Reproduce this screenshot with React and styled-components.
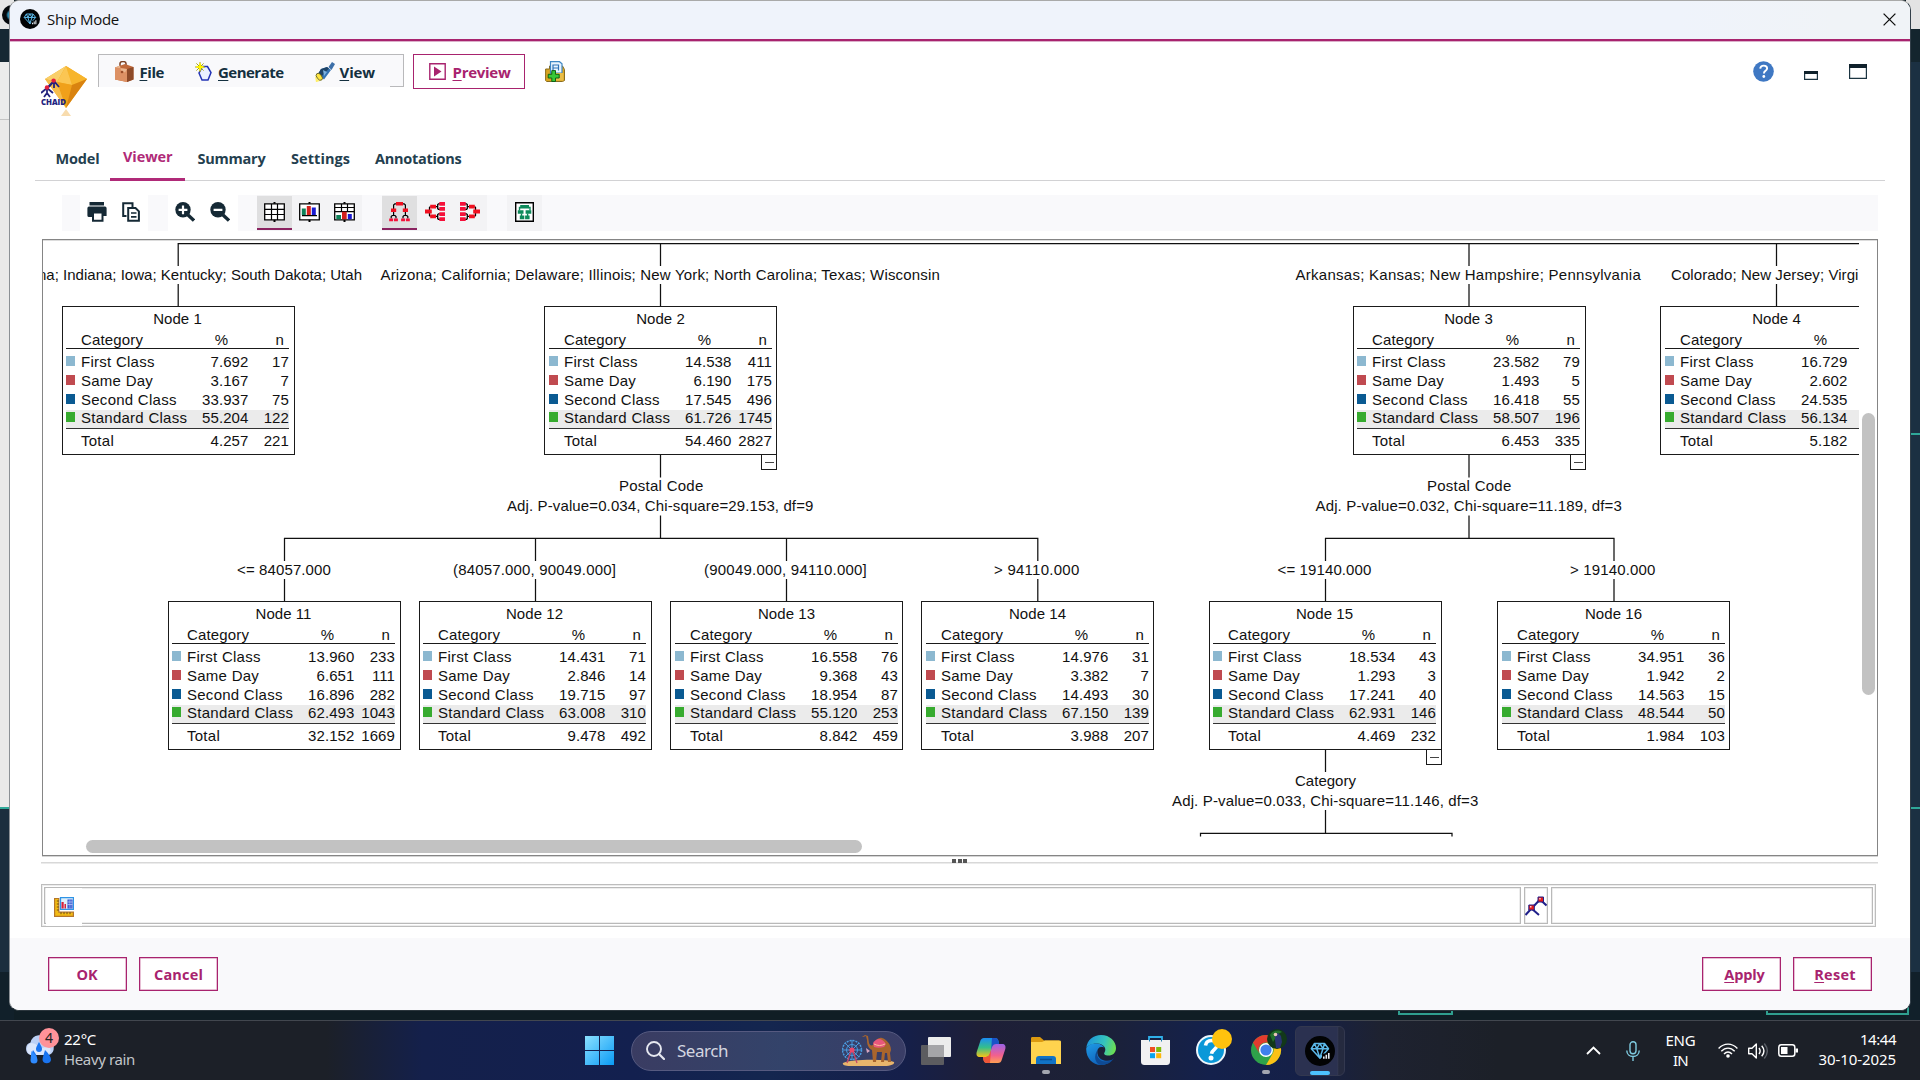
import React, { useLayoutEffect, useRef, useState } from "react";
import styled, { createGlobalStyle, css } from "styled-components";

const MAGENTA = "#a8236e";
const INK = "#14303f";
const UI = `"Open Sans", "Noto Sans", sans-serif`;
const SANS = `"Liberation Sans", Arial, sans-serif`;

const Global = createGlobalStyle`
  * { box-sizing: border-box; }
  html, body { margin: 0; padding: 0; overflow: hidden; }
  svg { display: block; flex: none; }
`;

/* ---------- text that is tracked to a fixed run width ---------- */
const Run = styled.span`
  display: inline-block;
  white-space: pre;
  width: ${(p) => p.$w}px;
`;

function Fit({ w, children }) {
  const ref = useRef(null);
  const [track, setTrack] = useState(0);
  useLayoutEffect(() => {
    const range = document.createRange();
    range.selectNodeContents(ref.current);
    const natural = range.getBoundingClientRect().width;
    setTrack((w - natural) / ref.current.textContent.length);
  }, [w]);
  return (
    <Run ref={ref} $w={w} style={{ letterSpacing: `${track}px` }}>
      {children}
    </Run>
  );
}

/* ---------- desktop and the window behind ---------- */
const Desktop = styled.div`
  position: relative;
  width: 1920px;
  height: 1080px;
  overflow: hidden;
  display: flex;
  flex-direction: column;
  background: #101e25;
  font-family: ${UI};
`;
const Behind = styled.div`
  height: 1020px;
  flex: none;
  display: flex;
  justify-content: space-between;
  background: #101e25;
`;
const EdgeStrip = styled.div`
  width: 14px;
  display: flex;
  flex-direction: column;
`;
const Band = styled.div`
  height: ${(p) => p.$h}px;
  background: ${(p) => p.$c};
  overflow: hidden;
`;
const BackDot = styled.div`
  width: 20px;
  height: 20px;
  margin: 5px 0 0 2px;
  border-radius: 50%;
  background: radial-gradient(circle, #2d8fb5 0 4px, #05090c 6px);
`;
const BackButton = styled.div`
  position: absolute;
  left: ${(p) => p.$x}px;
  top: 1000px;
  width: ${(p) => p.$w}px;
  height: 14.5px;
  border: 2px solid #2f9f8f;
`;

/* ---------- dialog ---------- */
const Dialog = styled.div`
  position: absolute;
  left: 9px;
  top: 0;
  width: 1902px;
  height: 1011px;
  border: 1px solid #9c9c9c;
  border-color: #a9a9a9 #333f49 #2b363d #8b9095;
  border-radius: 10px;
  overflow: hidden;
  background: #fff;
  display: flex;
  flex-direction: column;
`;
const TitleBar = styled.div`
  height: 40px;
  flex: none;
  display: flex;
  align-items: center;
  padding: 0 14.5px 2px 9.5px;
  background: linear-gradient(90deg, #eff3fb 0 88%, #f0f3f7 96%);
  border-bottom: 2px solid ${MAGENTA};
  box-shadow: 0 1px 0 #dcb0cb;
  font-size: 15px;
  color: #111;
`;
const TitleText = styled.div`
  flex: 1;
  margin-left: 7.5px;
`;
const Header = styled.div`
  height: 104px;
  flex: none;
  display: flex;
  align-items: flex-start;
  padding: 13px 43px 0 31px;
`;
const LogoBox = styled.div`
  margin: 12px 10px 0 0;
`;
const MenuBar = styled.div`
  width: 306px;
  height: 33px;
  display: flex;
  align-items: center;
  padding: 1px 0 0 16px;
  background: linear-gradient(#b9b9bb, #b9b9bb) 100% 100% / 13px 1.5px no-repeat, #f9f9fb;
  border: 1.5px solid #b9b9bb;
  border-bottom: 0;
  color: ${INK};
  font-size: 15px;
  font-weight: 700;
  u { text-underline-offset: 2px; text-decoration-thickness: 1px; }
`;
const MenuItem = styled.div`
  display: flex;
  align-items: center;
  gap: ${(p) => p.$gap}px;
  margin-right: ${(p) => p.$mr || 0}px;
`;
const PreviewButton = styled.div`
  width: 112px;
  height: 35px;
  margin: 0 20px 0 9px;
  display: flex;
  align-items: center;
  gap: 7px;
  padding-left: 14.5px;
  border: 1.5px solid ${MAGENTA};
  background: #fff;
  color: ${MAGENTA};
  font-size: 15px;
  font-weight: 700;
  u { text-underline-offset: 2px; text-decoration-thickness: 1px; }
`;
const FolderBox = styled.div`
  margin-top: 7px;
  flex: 1;
`;
const WindowTools = styled.div`
  display: flex;
  align-items: flex-end;
  margin-top: 7px;
`;
const ToolSpace = styled.div`
  margin: 0 0 ${(p) => p.$mb}px ${(p) => p.$ml}px;
`;

const Tabs = styled.div`
  height: 37px;
  flex: none;
  display: flex;
  align-items: stretch;
  margin: -1px 25px 0 25px;
  padding-left: 20.5px;
  border-bottom: 1.5px solid #d2d2d4;
  font-size: 14.5px;
  font-weight: 700;
  color: #24404f;
`;
const Tab = styled.div`
  height: 37px;
  line-height: 20px;
  padding-top: ${(p) => (p.$on ? 3 : 5)}px;
  margin-right: ${(p) => p.$mr}px;
  ${(p) =>
    p.$on &&
    css`
      padding-left: 13px;
      width: 75px;
      color: #b02a78;
      border-bottom: 3px solid #b02a78;
    `}
`;

const ToolBar = styled.div`
  width: 1816px;
  height: 36px;
  flex: none;
  margin: 14px 0 8px 52px;
  padding-left: 18px;
  display: flex;
  background: #f9f9fb;
`;
const ToolGroup = styled.div`
  display: flex;
  background: ${(p) => p.$bg};
  margin-right: ${(p) => p.$mr || 0}px;
`;
const ToolCell = styled.div`
  width: ${(p) => p.$w || 35}px;
  height: 33.5px;
  margin-top: 1px;
  display: flex;
  align-items: center;
  justify-content: center;
  border-bottom: 2px solid ${(p) => (p.$on ? "#8a2360" : "transparent")};
  background: ${(p) => (p.$on ? "#dfdfe0" : "transparent")};
`;

/* ---------- tree canvas ---------- */
const Frame = styled.div`
  width: 1836px;
  height: 617px;
  flex: none;
  margin-left: 32px;
  display: grid;
  grid-template-columns: 1815.5px 1fr;
  grid-template-rows: 597px 1fr;
  border: 1px solid #858585;
  box-shadow: 0 1px 0 #d5d5d5, inset 0 1px 0 #dcdcdc;
`;
const Stage = styled.div`
  position: relative;
  overflow: hidden;
  font-family: ${SANS};
  font-size: 15px;
  color: #111;
`;
const VThumb = styled.div`
  width: 13px;
  height: 282px;
  margin: 173px 0 0 3px;
  border-radius: 6.5px;
  background: #c2c2c2;
`;
const HThumb = styled.div`
  width: 776px;
  height: 13px;
  margin: 3px 0 0 43px;
  border-radius: 6.5px;
  background: #c2c2c2;
`;
const Caption = styled.div`
  position: absolute;
  left: ${(p) => p.$x}px;
  top: ${(p) => p.$y}px;
  line-height: 19px;
  white-space: nowrap;
`;
const NodeBox = styled.div`
  position: absolute;
  left: ${(p) => p.$x}px;
  top: ${(p) => p.$y}px;
  width: 233px;
  height: 149px;
  padding: ${(p) => (p.$nudge ? "2px 5px 0 3px" : "2px 4px 0")};
  border: 1px solid #1a1a1a;
  background: #fff;
  line-height: 19px;
`;
const NodeTitle = styled.div`
  height: 20px;
  text-align: center;
  letter-spacing: 0.05px;
`;
const NodeHead = styled.div`
  height: 20px;
  display: grid;
  grid-template-columns: 15px 108px 65px 1fr;
  padding-top: 1px;
  border-bottom: 1px solid #1a1a1a;
`;
const HeadCell = styled.div`
  text-align: ${(p) => p.$a || "left"};
  padding-right: ${(p) => p.$pr || 0}px;
  letter-spacing: 0.15px;
`;
const NodeRows = styled.div`
  margin-top: 4px;
  border-bottom: 1.5px solid #333;
`;
const NodeRow = styled.div`
  height: 18.75px;
  display: grid;
  grid-template-columns: 15px minmax(0, 1fr) 60px 40.5px;
  line-height: 17px;
  background: ${(p) => (p.$hot ? "linear-gradient(#ebebeb, #ebebeb) 0 1px no-repeat" : "none")};
  margin-top: ${(p) => p.$mt || 0}px;
`;
const Swatch = styled.div`
  width: 8.5px;
  height: 10px;
  margin-top: 3px;
  background: ${(p) => p.$c};
`;
const Name = styled.div`
  letter-spacing: 0.26px;
  white-space: nowrap;
`;
const Num = styled.div`
  text-align: right;
  letter-spacing: 0.1px;
  white-space: nowrap;
`;
const Collapse = styled.div`
  position: absolute;
  right: -1px;
  top: 147px;
  width: 16px;
  height: 16px;
  border: 1px solid #1a1a1a;
  background: #fff;
  display: flex;
  align-items: center;
  justify-content: center;
  &::after { content: ""; width: 9px; height: 1px; background: #444; }
`;

const CLASSES = [
  ["First Class", "#8cb8d0"],
  ["Same Day", "#c04a50"],
  ["Second Class", "#0a5a92"],
  ["Standard Class", "#37ab2f"],
];
const NODES = [
  { id: 1, x: 62, y: 306, nudge: true, pct: ["7.692", "3.167", "33.937", "55.204", "4.257"], n: [17, 7, 75, 122, 221] },
  { id: 2, x: 544, y: 306, open: true, pct: ["14.538", "6.190", "17.545", "61.726", "54.460"], n: [411, 175, 496, 1745, 2827] },
  { id: 3, x: 1353, y: 306, nudge: true, open: true, pct: ["23.582", "1.493", "16.418", "58.507", "6.453"], n: [79, 5, 55, 196, 335] },
  { id: 4, x: 1660, y: 306, pct: ["16.729", "2.602", "24.535", "56.134", "5.182"] },
  { id: 11, x: 168, y: 601, nudge: true, pct: ["13.960", "6.651", "16.896", "62.493", "32.152"], n: [233, 111, 282, 1043, 1669] },
  { id: 12, x: 419, y: 601, nudge: true, pct: ["14.431", "2.846", "19.715", "63.008", "9.478"], n: [71, 14, 97, 310, 492] },
  { id: 13, x: 670, y: 601, pct: ["16.558", "9.368", "18.954", "55.120", "8.842"], n: [76, 43, 87, 253, 459] },
  { id: 14, x: 921, y: 601, pct: ["14.976", "3.382", "14.493", "67.150", "3.988"], n: [31, 7, 30, 139, 207] },
  { id: 15, x: 1209, y: 601, nudge: true, open: true, pct: ["18.534", "1.293", "17.241", "62.931", "4.469"], n: [43, 3, 40, 146, 232] },
  { id: 16, x: 1497, y: 601, pct: ["34.951", "1.942", "14.563", "48.544", "1.984"], n: [36, 2, 15, 50, 103] },
];
/* text, left edge, baseline, run width */
const CAPTIONS = [
  ["na; Indiana; Iowa; Kentucky; South Dakota; Utah", 38, 280, 324],
  ["Arizona; California; Delaware; Illinois; New York; North Carolina; Texas; Wisconsin", 380.5, 280, 559.5],
  ["Arkansas; Kansas; New Hampshire; Pennsylvania", 1295.5, 280, 345.5],
  ["Colorado; New Jersey; Virgi", 1671, 280, 187.5],
  ["Postal Code", 619, 491, 84.5],
  ["Adj. P-value=0.034, Chi-square=29.153, df=9", 507, 511, 306.5],
  ["Postal Code", 1427, 491, 84.5],
  ["Adj. P-value=0.032, Chi-square=11.189, df=3", 1315.5, 511, 306.5],
  ["<= 84057.000", 237, 575, 94],
  ["(84057.000, 90049.000]", 453, 575, 163],
  ["(90049.000, 94110.000]", 704, 575, 163],
  ["> 94110.000", 994, 575, 85.5],
  ["<= 19140.000", 1277.5, 575, 94],
  ["> 19140.000", 1570, 575, 85.5],
  ["Category", 1295, 786, 61],
  ["Adj. P-value=0.033, Chi-square=11.146, df=3", 1172, 806, 306.5],
];
const LINKS = [
  "M178 243.5H1860",
  "M178.2 243V266M178.2 284V307",
  "M660.5 243V266M660.5 284V307",
  "M1469 243V266M1469 284V307",
  "M1776.5 243V266M1776.5 284V307",
  "M660.5 455V477.5M660.5 515.5V538",
  "M1469 455V477.5M1469 515.5V538",
  "M284 538.3H1038.4",
  "M284.5 538V561M284.5 579V602",
  "M535.5 538V561M535.5 579V602",
  "M786.5 538V561M786.5 579V602",
  "M1037.8 538V561M1037.8 579V602",
  "M1325 538.3H1614.5",
  "M1325.5 538V561M1325.5 579V602",
  "M1614 538V561M1614 579V602",
  "M1325.5 750V772M1325.5 810V833",
  "M1200.5 836.5V833.3H1452V836.5",
];

function TreeNode({ node }) {
  return (
    <NodeBox $x={node.x - 43} $y={node.y - 240} $nudge={node.nudge}>
      <NodeTitle>{`Node ${node.id}`}</NodeTitle>
      <NodeHead>
        <div />
        <HeadCell>Category</HeadCell>
        <HeadCell $a="center">%</HeadCell>
        {node.n && <HeadCell $a="right" $pr={5}>n</HeadCell>}
      </NodeHead>
      <NodeRows>
        {CLASSES.map(([name, color], i) => (
          <NodeRow key={name} $hot={i === 3}>
            <Swatch $c={color} />
            <Name>{name}</Name>
            <Num>{node.pct[i]}</Num>
            {node.n && <Num>{node.n[i]}</Num>}
          </NodeRow>
        ))}
      </NodeRows>
      <NodeRow $mt={3}>
        <div />
        <Name>Total</Name>
        <Num>{node.pct[4]}</Num>
        {node.n && <Num>{node.n[4]}</Num>}
      </NodeRow>
      {node.open && <Collapse />}
    </NodeBox>
  );
}

/* ---------- lower dialog ---------- */
const Splitter = styled.div`
  height: 28px;
  width: 1837px;
  flex: none;
  margin-left: 31px;
  padding-top: 2.5px;
  display: flex;
  justify-content: center;
  gap: 1.5px;
  background: linear-gradient(#d8d8d8, #d8d8d8) 0 6px / 100% 1.5px no-repeat;
`;
const Grip = styled.div`
  width: 4px;
  height: 4px;
  background: #555;
`;
const FieldRow = styled.div`
  width: 1835px;
  height: 43px;
  flex: none;
  margin: 0 0 11px 31px;
  padding: 2px 2px 3px 2px;
  display: flex;
  gap: 3px;
  border: 1px solid #bdbdbd;
  box-shadow: inset 0 0 0 1px #ececec;
`;
const Field = styled.div`
  width: ${(p) => p.$w}px;
  height: 37px;
  display: flex;
  align-items: center;
  border: 1px solid #b9b9b9;
  box-shadow: inset 0 0 0 0.5px #dcdcdc;
`;
const MetricCell = styled.div`
  width: 36px;
  height: 38px;
  margin: 0 0 -2px 1px;
  padding: 9px 0 0 7.5px;
  background: #fff;
`;
const Footer = styled.div`
  flex: 1;
  display: flex;
  align-items: flex-start;
  gap: 12.5px;
  padding: 19px 38px 0 37.5px;
  background: #f9f9fb;
  color: ${MAGENTA};
  font-size: 14.5px;
  font-weight: 700;
`;
const PushButton = styled.div`
  width: 79px;
  height: 34px;
  display: flex;
  align-items: center;
  justify-content: center;
  padding: 0 0 0 ${(p) => p.$shift || 0}px;
  border: 1px solid ${MAGENTA};
  box-shadow: inset 0 0 0 0.5px #cf7eaa;
  background: #fff;
  u { text-underline-offset: 2px; text-decoration-thickness: 1px; }
`;
const Spring = styled.div`
  flex: 1;
`;

/* ---------- taskbar ---------- */
const Taskbar = styled.div`
  height: 60px;
  flex: none;
  display: flex;
  align-items: center;
  border-top: 1px solid #42474f;
  background: linear-gradient(90deg, #1c2028 0 17%, #14204b 22%, #13204f 33%, #14264f 40%, #151f4a 47%, #1e1f38 51%, #1c2136 57%, #14214c 63%, #152047 68%, #1e2230 72%, #1c2028 78%);
  color: #fff;
  font-family: "Noto Sans", "Open Sans", sans-serif;
  font-size: 15px;
`;
const Weather = styled.div`
  display: flex;
  gap: 6px;
  padding-left: 24px;
  width: 585px;
`;
const TwoLines = styled.div`
  line-height: 20px;
  text-align: ${(p) => p.$a || "left"};
  padding-bottom: ${(p) => p.$lift}px;
  margin-top: ${(p) => p.$pull || 0}px;
`;
const Dim = styled.div`
  color: #c3c6ca;
`;
const WeatherPic = styled.div`
  position: relative;
  width: 34px;
  height: 40px;
`;
const Badge = styled.div`
  position: absolute;
  left: 15px;
  top: -3px;
  width: 20px;
  height: 20px;
  border-radius: 50%;
  background: #ff9299;
  color: #222;
  font-size: 14px;
  line-height: 20px;
  text-align: center;
`;
const SearchBox = styled.div`
  width: 275px;
  height: 40px;
  margin: 0 15px 0 17px;
  display: flex;
  align-items: center;
  padding: 0 10px 0 14px;
  border-radius: 20px;
  border: 1px solid #565a80;
  background: linear-gradient(90deg, #3a3c62, #33436a 55%, #3a3d66);
  color: #d4d6e0;
  font-size: 17px;
`;
const SearchText = styled.div`
  flex: 1;
  padding-left: 12px;
`;
const AppSlot = styled.div`
  width: ${(p) => p.$w || 55}px;
  height: 59px;
  display: flex;
  flex-direction: column;
  align-items: center;
  padding-top: ${(p) => p.$pt || 0}px;
`;
const Running = styled.div`
  width: ${(p) => p.$w}px;
  height: 4px;
  margin-top: ${(p) => p.$mt}px;
  margin-right: ${(p) => p.$mr || 0}px;
  border-radius: 2px;
  background: ${(p) => p.$c};
`;
const ActiveApp = styled.div`
  width: 50px;
  height: 50px;
  margin-left: 14px;
  display: flex;
  flex-direction: column;
  align-items: center;
  padding: 9px 0 0 0;
  border-radius: 6px;
  border: 1px solid #33384f;
  background: linear-gradient(90deg, #2b3150 0 86%, #353a52 87%, #252a3f 89%);
`;
const Tray = styled.div`
  flex: 1;
  display: flex;
  align-items: center;
  justify-content: flex-end;
  padding-right: 24px;
`;
const TraySpace = styled.div`
  margin-right: ${(p) => p.$mr}px;
`;

/* ---------- icons ---------- */
const DiamondIcon = ({ s }) => (
  <svg width={s} height={s} viewBox="0 0 30 30">
    <circle cx="15" cy="15" r="15" fill="#020304" />
    <g fill="none" stroke="#5bb8e8" strokeWidth="1.5" strokeLinejoin="round">
      <path d="M9.5 7.5h10l4 5.2-8.5 9.5-8.7-9.5zM6.3 12.7h17.2M9.5 7.5l2.3 5.2 3 9.3 3.2-9.3 1.5-5.2M11.8 12.7l3-5.2 3.2 5.2" />
    </g>
    <path d="M17 17.5h8v5.5h-8z" fill="#020304" />
    <path d="M18 20.5h1.6v2.3H18zM20.5 18.7h1.6v4.1h-1.6zM23 17h1.6v5.8H23z" fill="#e6edf2" />
  </svg>
);
const CloseIcon = () => (
  <svg width="13" height="13" viewBox="0 0 13 13">
    <path d="M.6.6l11.8 11.8M12.4.6L.6 12.4" stroke="#111" strokeWidth="1.3" />
  </svg>
);
const ChaidLogo = () => (
  <svg width="47" height="50" viewBox="0 0 47 50">
    <path d="M25 0L46 13 25 42 4 13z" fill="#f2aa1c" />
    <path d="M25 0L46 13 31 19z" fill="#f7b52c" />
    <path d="M25 0L4 13l12 3z" fill="#f9cf6a" />
    <path d="M25 0l6 19-15-3z" fill="#fbc653" />
    <path d="M16 16l15 3-6 23z" fill="#f0a01a" />
    <path d="M31 19l15-6-21 29z" fill="#d98310" />
    <path d="M4 13l12 3 9 26z" fill="#f6bd4c" />
    <path d="M25 43l5 7H20z" fill="#f8dcae" />
    <g stroke="#23237e" strokeWidth="1.8" fill="none">
      <path d="M0 27l6-5 6 5M6 22v6M3 31l3-4 3 4M6 22l7-7M8 21l5-6 5 6M13 15v7" />
    </g>
    <circle cx="6" cy="21.5" r="2.2" fill="#e21f3c" />
    <circle cx="12.6" cy="14.6" r="2.2" fill="#e21f3c" />
    <text x="0" y="38.5" fontFamily="Open Sans, sans-serif" fontWeight="800" fontSize="8.6" textLength="25" lengthAdjust="spacingAndGlyphs" fill="#23237e">CHAID</text>
  </svg>
);
const BagIcon = () => (
  <svg width="19" height="21" viewBox="0 0 19 21">
    <path d="M5 5V2.5C5 1 6.3.6 8 .6s3 .4 3 1.900V5" fill="none" stroke="#7a3f22" strokeWidth="1.5" />
    <path d="M0 6.500l10-3.500 8.500 3v12.500l-6.500 2.500L0 18.500z" fill="#c0683a" />
    <path d="M0 6.500l12 1.500V21L0 18.500z" fill="#dd9164" />
    <path d="M0 6.500l5-2 1 5 4 2 2-3.500z" fill="#eab58e" />
    <path d="M12 8l6.500-2v12.500L12 21z" fill="#8d4a28" />
    <circle cx="7" cy="11" r="1.3" fill="#9c4d28" />
  </svg>
);
const GenerateIcon = () => (
  <svg width="17" height="19" viewBox="0 0 17 19">
    <path d="M7.5 4.5h5l3.500 6-3 7.500H7L4 11z" fill="#eaf1ff" stroke="#2434b5" strokeWidth="1.5" />
    <path d="M5 0v10M0 5h10M1.4 1.4l7.2 7.2M8.600 1.400L1.400 8.600" stroke="#a8a41a" strokeWidth="1" />
    <path d="M5 1.5v7M1.5 5h7" stroke="#fff200" strokeWidth="2" />
  </svg>
);
const TorchIcon = () => (
  <svg width="20" height="20" viewBox="0 0 20 20">
    <path d="M0 14l5 5-4 1.200z" fill="#ffef6a" />
    <path d="M17 0l3 2-3.500 6-3-3z" fill="#3c6fa8" />
    <path d="M12 5l4 3-7 9.500L3 12l3-5z" fill="#3474b4" />
    <path d="M12 5l2 1.400-8 8.600-3-3 3-5z" fill="#1f4468" />
    <path d="M8 8l4 2-3 4z" fill="#7db2e0" />
    <ellipse cx="4.300" cy="14.800" rx="2.400" ry="4" transform="rotate(-38 4.3 14.8)" fill="#ffe640" stroke="#5c5a20" strokeWidth=".8" />
  </svg>
);
const PreviewIcon = () => (
  <svg width="17" height="17" viewBox="0 0 17 17">
    <path d="M.8.8h15.4v15.4H.8z" fill="#fff" stroke={MAGENTA} strokeWidth="1.4" />
    <path d="M5 3.600l7.500 4.900L5 13.400z" fill={MAGENTA} />
  </svg>
);
const FolderPlusIcon = () => (
  <svg width="20" height="21" viewBox="0 0 20 21">
    <path d="M.6 8h3.900V5h13l2 3.500v11L17.500 20.500H1.600l-1-1z" fill="#d9a520" stroke="#8a6d1e" />
    <path d="M5.500.7h9l2.500 2v9.500H5.500z" fill="#eaf5ff" stroke="#3f87c4" strokeWidth="1.200" />
    <path d="M8 9.500V4h5.500v5.500M8 7h5.500" fill="none" stroke="#2f74b8" strokeWidth="1.200" />
    <path d="M11 12h7.500v7.500H11z" fill="#e9bd48" />
    <path d="M6.800 9.600h3.700v3.700h3.700V17h-3.700v3.500H6.800V17H3.200v-3.700h3.600z" fill="#37c837" stroke="#0e6316" strokeWidth="1" />
  </svg>
);
const HelpIcon = () => (
  <svg width="21" height="21" viewBox="0 0 21 21">
    <circle cx="10.5" cy="10.5" r="10.3" fill="#3f78c3" />
    <path d="M7.2 7.6c.2-2 1.500-3 3.500-3s3.400 1.100 3.400 2.800c0 2.400-3.200 2.500-3.200 5" fill="none" stroke="#fff" strokeWidth="1.900" />
    <circle cx="10.800" cy="15.500" r="1.400" fill="#fff" />
  </svg>
);
const PaneIcon = ({ w, h, t }) => (
  <svg width={w} height={h} viewBox={`0 0 ${w} ${h}`}>
    <path d={`M.6.6h${w - 1.2}v${h - 1.2}H.6z`} fill="#fff" stroke="#1c3542" strokeWidth="1.2" />
    <path d={`M0 0h${w}v${t}H0z`} fill="#10222c" />
  </svg>
);
const DARK = "#152935";
const PrintIcon = () => (
  <svg width="20" height="20" viewBox="0 0 20 20">
    <path d="M2.500 0h14.500v3.500H2.500z" fill={DARK} />
    <path d="M2 4.600h16a1.600 1.600 0 0 1 1.600 1.600V14h-4v-3H5v4H2a1.600 1.600 0 0 1-1.600-1.600V6.200A1.600 1.600 0 0 1 2 4.600z" fill={DARK} />
    <path d="M6 10.500h9.500v8.300H6z" fill="#fff" stroke={DARK} strokeWidth="2" />
  </svg>
);
const CopyIcon = () => (
  <svg width="18" height="20" viewBox="0 0 18 20">
    <path d="M4.500 14H1.200V1.200h9.300V5" fill="none" stroke={DARK} strokeWidth="2" />
    <path d="M6.200 6h7.300l3.400 3.400v9.400H6.200z" fill="#fff" stroke={DARK} strokeWidth="2" />
    <path d="M9 11h5.500M9 14.800h5.500" stroke={DARK} strokeWidth="1.700" />
  </svg>
);
const ZoomIcon = ({ plus }) => (
  <svg width="20" height="20" viewBox="0 0 20 20">
    <circle cx="8" cy="7.800" r="7.700" fill={DARK} />
    <path d="M13 13l6 5.600" stroke={DARK} strokeWidth="3.400" />
    <path d={plus ? "M3.600 7.800h8.800M8 3.400v8.800" : "M3.600 7.800h8.800"} stroke="#fff" strokeWidth="2.200" />
  </svg>
);
const GridFrame = ({ children }) => (
  <svg width="21" height="20" viewBox="0 0 21 20">
    <path d="M10.500 0v20" stroke="#000" strokeWidth="2" />
    <path d="M.7 1.800h19.600v16H.7z" fill="#fff" stroke="#000" strokeWidth="1.300" />
    {children}
  </svg>
);
const TableIcon = () => (
  <GridFrame>
    <path d="M7.500 2v16M13.500 2v16M1 7.300h19M1 12.500h19" stroke="#000" strokeWidth="1.200" />
  </GridFrame>
);
const BarsIcon = () => (
  <GridFrame>
    <path d="M2.800 6.500h4V13h-4z" fill="#0c8058" />
    <path d="M7.800 4h4v9h-4z" fill="#d3201c" />
    <path d="M12.800 5.500h4V13h-4z" fill="#1a1ad0" />
    <path d="M3 13.600h15" fill="none" stroke="#000" strokeWidth="1.200" />
  </GridFrame>
);
const TableBarsIcon = () => (
  <GridFrame>
    <path d="M7.500 2v8M13.500 2v8M1 5.500h19M1 9.700h19" stroke="#000" strokeWidth="1.200" />
    <path d="M2.300 13h4.700v4.300H2.300z" fill="#0c8058" />
    <path d="M8 9.700h4.700v7.600H8z" fill="#d3201c" />
    <path d="M13.800 12h4v5.300h-4z" fill="#1a1ad0" />
  </GridFrame>
);
const TreeDownIcon = () => (
  <svg width="21" height="20" viewBox="0 0 21 20">
    <path d="M7 1.800H5.800L4.600 3V13.500M14 1.800h1.200L16.400 3V13.500M2.200 16.500v-2l1-1H6l1 1v2M14 16.500v-2l1-1h2.800l1 1v2" fill="none" stroke="#000" strokeWidth="1.200" />
    <path d="M7 0h7v3.600H7zM2 6.600h5.200v3.300H2zM13.800 6.600H19v3.300h-5.200z" fill="#f01020" />
    <path d="M.2 16.500h3.900V19.200H.2zM5 16.500h3.900V19.200H5zM12.100 16.500H16V19.200h-3.900zM16.900 16.500h3.900V19.200h-3.900z" fill="#f5103a" />
  </svg>
);
const TreeSideIcon = ({ flip }) => (
  <svg width="20" height="19" viewBox="0 0 20 19">
    <g transform={flip ? "translate(20 0) scale(-1 1)" : undefined}>
      <path d="M4.500 8V5.500l1-.9M4.500 11v2.500l1 .9M10 4.600h2.800M10 14.400h2.800M15.500 1.800h-2l-.8.800v4l.8.700h2M15.500 11.800h-2l-.8.800v4l.8.700h2" fill="none" stroke="#000" strokeWidth="1.300" />
      <path d="M0 7.600h6.800v3.900H0zM5.200 2.800h5.800v3.700H5.200zM5.200 12.500h5.800v3.700H5.200z" fill="#f01020" />
      <path d="M14.300 0H20v3.700h-5.700zM14.300 5.100H20v3.700h-5.700zM14.300 10.200H20v3.700h-5.700zM14.300 15.300H20V19h-5.700z" fill="#f5103a" />
    </g>
  </svg>
);
const MapIcon = () => (
  <svg width="19" height="20" viewBox="0 0 19 20">
    <path d="M.7.700h17.600v18.600H.7z" fill="#fff" stroke="#000" strokeWidth="1.400" />
    <path d="M5.200 3h8.800v3.600H5.200zM2.800 8.300h5.700v3.400H2.800zM10.600 8.300h5.700v3.400h-5.700zM4.800 13.600h4.500v3.600H4.800zM10.100 13.600h4.500v3.600h-4.500z" fill="#0d8a5a" />
    <path d="M6 5.500H4.500v3M13.500 5.500H15v3M6.500 11.500v2.500M12.600 11.500v2.500" fill="none" stroke="#0d8a5a" strokeWidth="1.400" />
  </svg>
);
const MetricIcon = () => (
  <svg width="20" height="20" viewBox="0 0 20 20">
    <path d="M.6 1.500h4.200v13.700h14.600v4.200H.6z" fill="#f3bb13" stroke="#b4762a" strokeWidth="1.200" />
    <path d="M2.800 4h2M2.800 7h2M2.800 10h2M2.800 13h2M7 17.200v-2M10 17.200v-2M13 17.200v-2M16 17.200v-2" stroke="#6b4a12" strokeWidth="1" />
    <path d="M6.500.500h13v11.800h-13z" fill="#dff0fb" stroke="#2f93e6" strokeWidth="1.300" />
    <path d="M7.500 5h2.200v6.500H7.500zM10.500 7H12v4.500h-1.500z" fill="#d8203c" />
    <path d="M13.500 2.500h5v9h-5z" fill="#2440c8" />
    <path d="M13.500 5h5M13.500 7.500h5M15.200 2.500v9M17 2.500v9" stroke="#cfe0ff" strokeWidth=".6" />
  </svg>
);
const PathIcon = () => (
  <svg width="22" height="20" viewBox="0 0 22 20">
    <path d="M.5 19l6-6.500L14 19M7 12l8-8.500 6.500 6" fill="none" stroke="#20208a" strokeWidth="2" />
    <path d="M3.800 9h5.500v5H3.800zM13 1h5.500v5H13z" fill="#e51a1a" stroke="#20208a" strokeWidth="1" />
    <path d="M5 10h1.500v1.500H5zM14.200 2h1.500v1.500h-1.500z" fill="#ffd0d0" />
  </svg>
);
const RainIcon = () => (
  <svg width="34" height="40" viewBox="0 0 34 40">
    <path d="M7 24a6.500 6.500 0 0 1-.5-12.500A9.500 9.500 0 0 1 24 9a8 8 0 0 1 1 15z" fill="#bcd0f5" />
    <path d="M7 24a6.500 6.500 0 0 1 0-12c4 0 8 3 9 6 3-2 8-2 10-1 2 3-1 7-3 7z" fill="#dbe6fb" />
    <path d="M15 11c2 4 3 5 3 7a3 3 0 0 1-6 0c0-2 1-3 3-7zM9 19c3 4 4 6 4 8.500a4 4 0 0 1-6 0C6.500 25 7.500 23 9 19zM21 19c4 4 6 7 6 10a4.400 4.400 0 0 1-8.500 0c0-3 1.500-6 2.500-10z" fill="#1a74f0" />
    <path d="M7.500 20c3 3 6 6 6 9a3.500 3.500 0 0 1-7 0z" fill="#2f8bff" />
  </svg>
);
const StartIcon = () => (
  <svg width="29" height="29" viewBox="0 0 29 29">
    <defs>
      <linearGradient id="win" x1="0" y1="0" x2="1" y2="1">
        <stop offset="0" stopColor="#8be0ff" />
        <stop offset="1" stopColor="#0a9bf5" />
      </linearGradient>
    </defs>
    <path d="M0 0h14v14H0zM15 0h14v14H15zM0 15h14v14H0zM15 15h14v14H15z" fill="url(#win)" />
  </svg>
);
const SearchIcon = () => (
  <svg width="19" height="19" viewBox="0 0 19 19">
    <circle cx="8" cy="8" r="7" fill="none" stroke="#e6e8f0" strokeWidth="1.900" />
    <path d="M13 13l5 5" stroke="#e6e8f0" strokeWidth="2.200" strokeLinecap="round" />
  </svg>
);
const CamelIcon = () => (
  <svg width="53" height="31" viewBox="0 0 53 31">
    <path d="M1 28c8-4 44-4 51-1 1 2-3 4-10 4H8c-5 0-8-1-7-3z" fill="#e8b56c" />
    <g stroke="#4a9be0" fill="none">
      <circle cx="10" cy="15" r="9.500" strokeWidth="1.500" strokeDasharray="2 1" />
      <circle cx="10" cy="15" r="5.500" strokeWidth="1" />
      <path d="M10 5v20M0 15h20M3 8l14 14M17 8L3 22" strokeWidth="1" />
      <path d="M9 16L5 28M11 16l4 12" stroke="#c6476b" strokeWidth="1.300" />
    </g>
    <circle cx="10" cy="15" r="2.600" fill="#e9476b" />
    <path d="M20 2l3-2 3 1 1 7c1 3 3 3 5 1 2-5 5-7 8-6 4 1 9 6 9 12l-1 3 1 9h-3l-1-9h-2l-1 9h-3l1-10h-5l-1 10h-3l-1-12c-4-2-5-6-5-10l-1-4-3 1z" fill="#a9652d" />
    <path d="M31 8c4-6 9-5 13 1l-2 3c-4 1-7 1-10 0z" fill="#e8577c" />
    <path d="M32 9c4 2 7 2 11 0" stroke="#ffc0a0" strokeWidth="1" fill="none" />
    <path d="M24 13l4 3-3 2z" fill="#d9a5c0" />
  </svg>
);
const TaskViewIcon = () => (
  <svg width="30" height="28" viewBox="0 0 30 28">
    <rect x="7" y="0" width="23" height="20" rx="1" fill="#ececec" />
    <rect x="0" y="8" width="23" height="20" rx="1" fill="#5c5c60" />
    <rect x="7" y="8" width="16" height="12" fill="#a5a5a8" />
  </svg>
);
const CopilotIcon = () => (
  <svg width="30" height="27" viewBox="0 0 30 27">
    <defs>
      <linearGradient id="cpa" x1="0" y1="0" x2="0" y2="1">
        <stop offset="0" stopColor="#1b8df5" />
        <stop offset=".5" stopColor="#35bf8a" />
        <stop offset="1" stopColor="#f6c417" />
      </linearGradient>
      <linearGradient id="cpb" x1="0" y1="0" x2="0" y2="1">
        <stop offset="0" stopColor="#9b63e8" />
        <stop offset=".6" stopColor="#f2608e" />
        <stop offset="1" stopColor="#ffa052" />
      </linearGradient>
    </defs>
    <path d="M8 1h11c2 0 3 1 3.500 3l.5 3h-3c-2 0-3 1-4 4l-2 6c-1 2-2 3-4 3H4C1 20 0 18 .7 15L4 5c.8-3 2-4 4-4z" fill="url(#cpa)" />
    <path d="M16 1h3c2 0 3 1 3.500 3l.7 3H20c-2 0-3 1-4 4l-1 3z" fill="#1a53c8" />
    <path d="M22 26H11c-2 0-3-1-3.500-3L7 20h3c2 0 3-1 4-4l2-6c1-2 2-3 4-3h6c3 0 4 2 3.300 5L26 22c-.8 3-2 4-4 4z" fill="url(#cpb)" />
    <path d="M14 26h-3c-2 0-3-1-3.500-3L7 20h3c2 0 3-1 4-4l1-3z" fill="#ef5538" />
  </svg>
);
const ExplorerIcon = () => (
  <svg width="30" height="27" viewBox="0 0 30 27">
    <path d="M0 1.500C0 .5.500 0 1.500 0H9l4 3.500h15v5H0z" fill="#dc9a10" />
    <path d="M0 5h11l3-1.500h14.500c1 0 1.500.500 1.500 1.500v22H0z" fill="#ffd34e" />
    <path d="M5 27v-5c0-2 1-3 3-3h14c2 0 3 1 3 3v5z" fill="#1173c6" />
    <path d="M9 22.500h12" stroke="#0b4f92" strokeWidth="1.500" />
  </svg>
);
const EdgeIcon = () => (
  <svg width="30" height="30" viewBox="0 0 30 30">
    <defs>
      <linearGradient id="eda" x1="0" y1=".3" x2="1" y2=".5">
        <stop offset="0" stopColor="#1c93dd" />
        <stop offset=".6" stopColor="#35c4bd" />
        <stop offset="1" stopColor="#6cdf52" />
      </linearGradient>
      <linearGradient id="edb" x1="0" y1="0" x2=".6" y2="1">
        <stop offset="0" stopColor="#1f9be6" />
        <stop offset="1" stopColor="#0f5fb8" />
      </linearGradient>
    </defs>
    <path d="M.3 13C1 5 7.500 0 15 0c9 0 15 6.500 15 13 0 5-3.500 7.500-7.500 7.500-4 0-5-1.500-4-3C21 14 18 8.500 11 8.500 5 8.500 1.500 11 .3 13z" fill="url(#eda)" />
    <path d="M.3 13C3 9 7 8 11 8.500c4 .5 6 2 7 4-6-2-8 3-6 8 2 4.500 8 6.500 14 4.500-3 3.500-7 5-11 5C6 30-.5 22 .3 13z" fill="url(#edb)" />
    <path d="M12 14c-3 6 1 13 8 12.500 3 0 6-1.500 8-3.500-3 5-8 7-13 7-6-1-8-9-3-16z" fill="#0e4a94" />
  </svg>
);
const StoreIcon = () => (
  <svg width="29" height="29" viewBox="0 0 29 29">
    <path d="M8 6V1h13v5" fill="none" stroke="#2fb0ea" strokeWidth="1.800" />
    <path d="M0 4h29v21c0 3-1 4-4 4H4c-3 0-4-1-4-4z" fill="#f1f1f2" />
    <path d="M8 4.500h1M20 4.500h1" stroke="#1f7fb0" strokeWidth="2" />
    <path d="M9 11h5v5H9z" fill="#f04e23" />
    <path d="M15.200 11h5v5h-5z" fill="#80bb0a" />
    <path d="M9 17.200h5v5H9z" fill="#08a4ee" />
    <path d="M15.200 17.200h5v5h-5z" fill="#fdb80a" />
  </svg>
);
const AssistIcon = () => (
  <svg width="36" height="36" viewBox="0 0 36 36">
    <circle cx="15" cy="21" r="14" fill="#0a98d8" stroke="#eef6fb" strokeWidth="2" />
    <path d="M9.500 16.500c.5-3.500 3-5 6-5s5.500 2 5.500 4.800c0 4-5 4-5.500 8.500" fill="none" stroke="#fff" strokeWidth="3.600" />
    <circle cx="15" cy="29" r="2.500" fill="#fff" />
    <circle cx="26" cy="10" r="10" fill="#ffc20e" />
  </svg>
);
const ChromeIcon = () => (
  <svg width="36" height="36" viewBox="0 0 36 36">
    <circle cx="15" cy="21" r="15" fill="#2ea24a" />
    <path d="M2 13.500A15 15 0 0 1 28 13.500H15a7.500 7.500 0 0 0-6.500 11.200z" fill="#e23b2e" />
    <path d="M28 13.500A15 15 0 0 1 15 36l6.500-11.200A7.500 7.500 0 0 0 21.500 17L15 13.500z" fill="#fbc116" />
    <circle cx="15" cy="21" r="7" fill="#fff" />
    <circle cx="15" cy="21" r="5.600" fill="#3f7fec" />
    <circle cx="26" cy="10" r="10" fill="#12381a" />
    <path d="M19 6c2-4 8-6 12-3l-4 2-5 8z" fill="#23702c" />
    <path d="M24 6l3-2 3 3 1 6-2 6h-4l-1-8z" fill="#2a3474" />
    <circle cx="24.500" cy="5.500" r="1.800" fill="#e8c7b5" />
  </svg>
);
const ChevronUp = () => (
  <svg width="15" height="9" viewBox="0 0 15 9">
    <path d="M1 8l6.500-6.500L14 8" fill="none" stroke="#fff" strokeWidth="1.800" />
  </svg>
);
const MicIcon = () => (
  <svg width="14" height="20" viewBox="0 0 14 20">
    <rect x="4" y=".8" width="6" height="12" rx="3" fill="none" stroke="#7fcbe0" strokeWidth="1.400" />
    <path d="M.8 9.500c0 8 12.400 8 12.400 0M7 15.500V20" fill="none" stroke="#7fcbe0" strokeWidth="1.400" />
  </svg>
);
const WifiIcon = () => (
  <svg width="20" height="15" viewBox="0 0 20 15">
    <g fill="none" stroke="#fff" strokeWidth="1.400">
      <path d="M.6 5.500c5.500-5.800 13.300-5.800 18.800 0M3.300 8.300c4-4.200 9.400-4.200 13.400 0M6 11c2.600-2.700 5.400-2.700 8 0" />
    </g>
    <circle cx="10" cy="13" r="1.800" fill="#fff" />
  </svg>
);
const SpeakerIcon = () => (
  <svg width="20" height="16" viewBox="0 0 20 16">
    <path d="M.7 5.200h3.300L8.300 1v14L4 10.800H.7z" fill="none" stroke="#fff" strokeWidth="1.400" strokeLinejoin="round" />
    <path d="M11 5c1.500 2 1.500 4 0 6M13.700 2.700c3 3.500 3 7 0 10.600" fill="none" stroke="#fff" strokeWidth="1.400" />
    <path d="M16.300.500c4 5 4 10 0 15" fill="none" stroke="#5a5f67" strokeWidth="1.400" />
  </svg>
);
const BatteryIcon = () => (
  <svg width="20" height="13" viewBox="0 0 20 13">
    <rect x=".8" y=".8" width="16" height="11.400" rx="2.500" fill="none" stroke="#fff" strokeWidth="1.500" />
    <path d="M3 3h6.500v7H3zM17.500 4.500H20v4h-2.500z" fill="#fff" />
  </svg>
);

export default function App() {
  return (
    <Desktop>
      <Global />
      <Behind>
        <EdgeStrip>
          <Band $h={29} $c="#e6e6e6"><BackDot /></Band>
          <Band $h={33} $c="#162833" />
          <Band $h={57} $c="#ebebeb" />
          <Band $h={1} $c="#c4c4c4" />
          <Band $h={687} $c="#e9e9e9" />
          <Band $h={2} $c="#2fa899" />
          <Band $h={163} $c="#1b2e3e" />
          <Band $h={48} $c="#11202a" />
        </EdgeStrip>
        <EdgeStrip>
          <Band $h={29} $c="#e3e3e3" />
          <Band $h={33} $c="#14252e" />
          <Band $h={371} $c="#1b3042" />
          <Band $h={2} $c="#2fa899" />
          <Band $h={372} $c="#1b3042" />
          <Band $h={2} $c="#2fa899" />
          <Band $h={163} $c="#1b3042" />
          <Band $h={48} $c="#11202a" />
        </EdgeStrip>
      </Behind>
      <BackButton $x={1398} $w={55} />
      <BackButton $x={1766} $w={143} />

      <Dialog>
        <TitleBar>
          <DiamondIcon s={20} />
          <TitleText><Fit w={72}>Ship Mode</Fit></TitleText>
          <CloseIcon />
        </TitleBar>

        <Header>
          <LogoBox><ChaidLogo /></LogoBox>
          <MenuBar>
            <MenuItem $gap={5.5} $mr={31}>
              <BagIcon />
              <Fit w={24.5}><u>F</u>ile</Fit>
            </MenuItem>
            <MenuItem $gap={6} $mr={31.5}>
              <GenerateIcon />
              <Fit w={65.5}><u>G</u>enerate</Fit>
            </MenuItem>
            <MenuItem $gap={4.5}>
              <TorchIcon />
              <Fit w={35.5}><u>V</u>iew</Fit>
            </MenuItem>
          </MenuBar>
          <PreviewButton>
            <PreviewIcon />
            <Fit w={58}><u>P</u>review</Fit>
          </PreviewButton>
          <FolderBox><FolderPlusIcon /></FolderBox>
          <WindowTools>
            <HelpIcon />
            <ToolSpace $ml={30} $mb={2}><PaneIcon w={14} h={9} t={3} /></ToolSpace>
            <ToolSpace $ml={31.5} $mb={3}><PaneIcon w={18} h={15} t={4} /></ToolSpace>
          </WindowTools>
        </Header>

        <Tabs>
          <Tab $mr={10.5}><Fit w={44}>Model</Fit></Tab>
          <Tab $on $mr={12.5}><Fit w={49.5}>Viewer</Fit></Tab>
          <Tab $mr={25.5}><Fit w={68}>Summary</Fit></Tab>
          <Tab $mr={25}><Fit w={59}>Settings</Fit></Tab>
          <Tab $mr={0}><Fit w={86.5}>Annotations</Fit></Tab>
        </Tabs>

        <ToolBar>
          <ToolGroup $bg="#fff" $mr={20}>
            <ToolCell $w={34}><PrintIcon /></ToolCell>
            <ToolCell $w={34}><CopyIcon /></ToolCell>
          </ToolGroup>
          <ToolGroup $bg="#fff" $mr={19}>
            <ToolCell $w={33}><ZoomIcon plus /></ToolCell>
            <ToolCell $w={37}><ZoomIcon /></ToolCell>
          </ToolGroup>
          <ToolGroup $bg="#f3f3f5" $mr={20}>
            <ToolCell $on><TableIcon /></ToolCell>
            <ToolCell><BarsIcon /></ToolCell>
            <ToolCell><TableBarsIcon /></ToolCell>
          </ToolGroup>
          <ToolGroup $bg="#f3f3f5" $mr={20}>
            <ToolCell $on><TreeDownIcon /></ToolCell>
            <ToolCell><TreeSideIcon /></ToolCell>
            <ToolCell><TreeSideIcon flip /></ToolCell>
          </ToolGroup>
          <ToolGroup $bg="#f3f3f5">
            <ToolCell><MapIcon /></ToolCell>
          </ToolGroup>
        </ToolBar>

        <Frame>
          <Stage>
            <svg width="1815.5" height="597" viewBox="43 240 1815.5 597">
              <path d={LINKS.join("")} fill="none" stroke="#111" strokeWidth="1.25" />
            </svg>
            {CAPTIONS.map(([text, x, base, w]) => (
              <Caption key={text + x} $x={x - 43} $y={base - 15 - 240}>
                <Fit w={w}>{text}</Fit>
              </Caption>
            ))}
            {NODES.map((node) => (
              <TreeNode key={node.id} node={node} />
            ))}
          </Stage>
          <VThumb />
          <HThumb />
        </Frame>

        <Splitter>
          <Grip />
          <Grip />
          <Grip />
        </Splitter>

        <FieldRow>
          <Field $w={1478}>
            <MetricCell><MetricIcon /></MetricCell>
          </Field>
          <Field $w={24}><PathIcon /></Field>
          <Field $w={322} />
        </FieldRow>

        <Footer>
          <PushButton><Fit w={21}>OK</Fit></PushButton>
          <PushButton><Fit w={49}>Cancel</Fit></PushButton>
          <Spring />
          <PushButton $shift={7}><Fit w={40.5}><u>A</u>pply</Fit></PushButton>
          <PushButton $shift={5}><Fit w={41.5}><u>R</u>eset</Fit></PushButton>
        </Footer>
      </Dialog>

      <Taskbar>
        <Weather>
          <WeatherPic>
            <RainIcon />
            <Badge>4</Badge>
          </WeatherPic>
          <TwoLines $lift={2} $pull={-2}>
            <div><Fit w={32}>22°C</Fit></div>
            <Dim><Fit w={71}>Heavy rain</Fit></Dim>
          </TwoLines>
        </Weather>
        <StartIcon />
        <SearchBox>
          <SearchIcon />
          <SearchText><Fit w={51}>Search</Fit></SearchText>
          <CamelIcon />
        </SearchBox>
        <TaskViewIcon />
        <AppSlot $w={80} $pt={16}><CopilotIcon /></AppSlot>
        <AppSlot $w={30} $pt={16}>
          <ExplorerIcon />
          <Running $w={8} $mt={6} $c="#a3a6b0" />
        </AppSlot>
        <AppSlot $w={80} $pt={14}><EdgeIcon /></AppSlot>
        <AppSlot $w={29} $pt={15}><StoreIcon /></AppSlot>
        <AppSlot $w={87} $pt={8}><AssistIcon /></AppSlot>
        <AppSlot $w={24} $pt={8}>
          <ChromeIcon />
          <Running $w={8} $mt={5} $mr={7} $c="#a3a6b0" />
        </AppSlot>
        <ActiveApp>
          <DiamondIcon s={30} />
          <Running $w={20} $mt={5} $c="#4cc2ff" />
        </ActiveApp>
        <Tray>
          <TraySpace $mr={25}><ChevronUp /></TraySpace>
          <TraySpace $mr={26}><MicIcon /></TraySpace>
          <TraySpace $mr={22}>
            <TwoLines $a="center" $lift={2}>
              <div><Fit w={30}>ENG</Fit></div>
              <div><Fit w={15}>IN</Fit></div>
            </TwoLines>
          </TraySpace>
          <TraySpace $mr={10}><WifiIcon /></TraySpace>
          <TraySpace $mr={10}><SpeakerIcon /></TraySpace>
          <TraySpace $mr={21}><BatteryIcon /></TraySpace>
          <TwoLines $a="right" $lift={4}>
            <div><Fit w={36}>14:44</Fit></div>
            <div><Fit w={77.5}>30-10-2025</Fit></div>
          </TwoLines>
        </Tray>
      </Taskbar>
    </Desktop>
  );
}
